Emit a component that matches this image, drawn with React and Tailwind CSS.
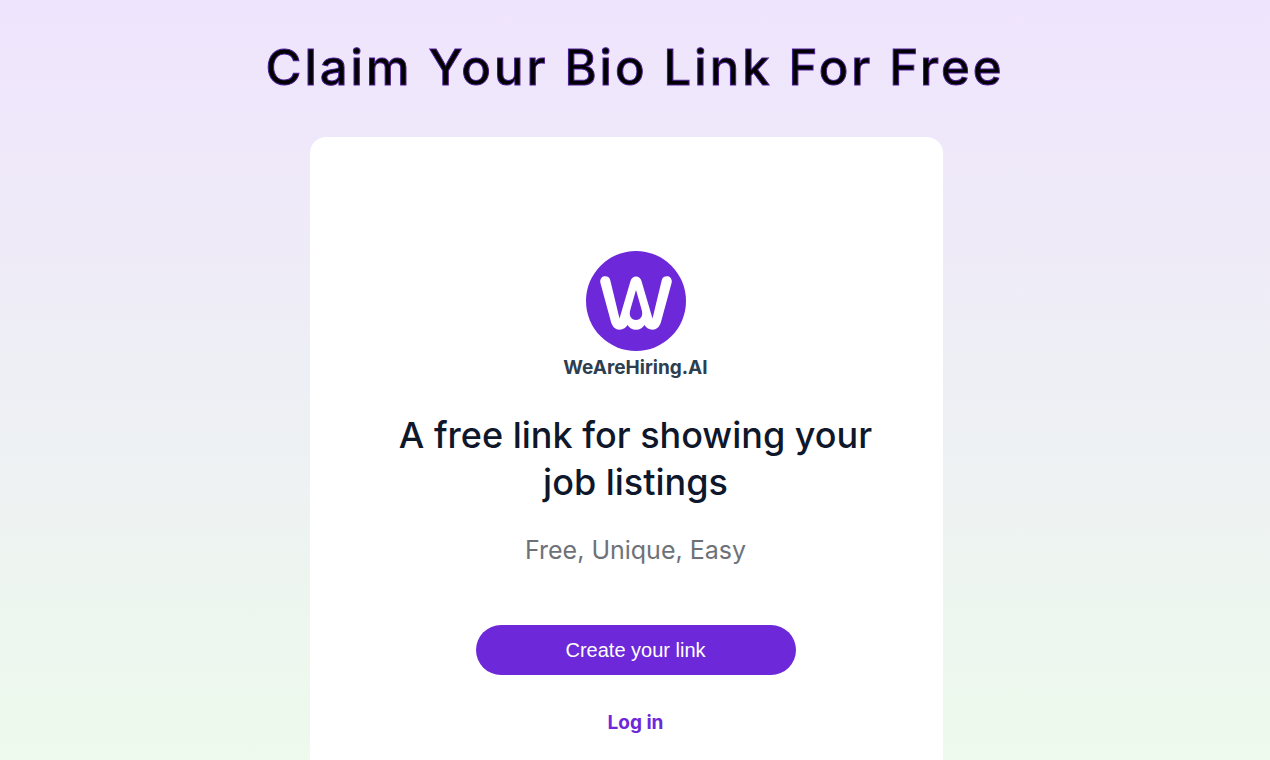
const Logo = () => (
  <svg viewBox="0 0 100 100" className="size-25" aria-hidden="true">
    <circle cx="50" cy="50" r="50" fill="#6d28d9" />
    <path
      d="M14.3 31.5 A5.100 5.100 0 0 1 24.200 29 L33.500 67.500 L44.500 30 Q46 25.500 50 25.500 Q54 25.500 55.500 30 L66.500 67.500 L75.800 29 A5.100 5.100 0 0 1 85.700 31.500 L75 71 C73.500 76 70.500 78.700 66.500 78.700 C62.500 78.700 60 76.500 58.400 74 C56.500 77 54 78.700 50 78.700 C46 78.700 43.500 77 41.600 74 C40 76.500 37.500 78.700 33.500 78.700 C29.500 78.700 26.500 76 25 71 Z"
      fill="#fff"
    />
    <path d="M50 39 L55.300 57.500 C58 65 54.500 69 50 69 C45.500 69 42 65 44.700 57.500 Z" fill="#6d28d9" />
  </svg>
);

const App = () => {
  return (
    <main className="flex min-h-screen flex-col items-center bg-linear-to-b from-[#efe4fd] to-[#edfaec] font-['Inter',sans-serif]">
      <h1 className="pt-9 text-center text-[49px]/16 font-medium tracking-[3px] text-black [-webkit-text-stroke:1px_#4c1d95]">
        Claim Your Bio Link For Free
      </h1>

      <section className="mt-[37px] mr-[18px] flex w-full max-w-[633px] flex-1 flex-col items-center rounded-t-2xl bg-white pt-[114px] pr-[54px] pb-6 pl-[73px] text-center">
        <Logo />
        <p className="mt-px text-[19px]/8 font-bold text-[#2c3e50]">WeAreHiring.AI</p>

        <h2 className="mt-7 max-w-[490px] text-4xl/[47px] font-medium text-slate-900">
          A free link for showing your job listings
        </h2>
        <p className="mt-7 text-[25px]/8 text-[#6e7278]">Free, Unique, Easy</p>

        <button
          type="button"
          className="mt-[59px] h-[50px] w-full max-w-80 rounded-full bg-[#6d28d9] font-['Liberation_Sans',sans-serif] text-xl text-white"
        >
          Create your link
        </button>
        <a href="#login" className="mt-8 text-[19px]/8 font-bold text-[#6d28d9]">
          Log in
        </a>
      </section>
    </main>
  );
};

export default App;
